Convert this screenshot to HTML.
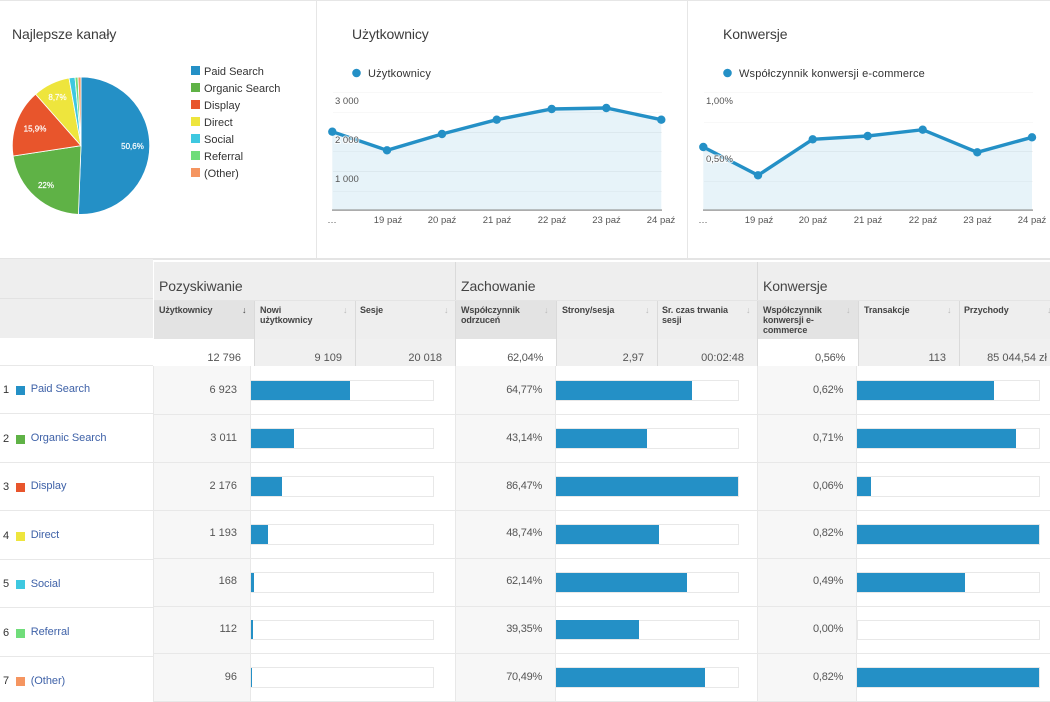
<!DOCTYPE html>
<html><head><meta charset="utf-8"><style>
html,body{margin:0;padding:0;background:#fff}
svg{display:block}
text{font-family:"Liberation Sans",sans-serif}
.t{font-size:14px;fill:#3c3c3c;letter-spacing:-.1px}
.h{font-size:14px;fill:#444;letter-spacing:-.1px}
.l{font-size:11px;fill:#333}
.m{font-size:11px;fill:#333;letter-spacing:.17px}
.a{font-size:9.5px;fill:#555}
.w{paint-order:stroke;stroke:#fff;stroke-width:2px;stroke-opacity:.75}
.s{font-size:9px;fill:#444;font-weight:bold;letter-spacing:-.1px}
.n{font-size:11px;fill:#555;text-anchor:end}
.c{font-size:11px;fill:#555;text-anchor:end;letter-spacing:-.25px}
.r{font-size:11px;fill:#333}
.k{font-size:11px;fill:#3f62a8;letter-spacing:-.05px}
.p{font-size:8px;fill:#fff;stroke:#fff;stroke-width:.2px;text-anchor:middle}
.u{font-size:9px;fill:#bbb}
</style></head><body>
<svg xmlns="http://www.w3.org/2000/svg" width="1050" height="702" viewBox="0 0 1050 702">
<rect width="1050" height="702" fill="#fff"/>
<!-- card frame -->
<rect x="0" y="0" width="1050" height="1" fill="#e6e6e6"/>
<rect x="316" y="0" width="1" height="258" fill="#e6e6e6"/>
<rect x="687" y="0" width="1" height="258" fill="#e6e6e6"/>
<rect x="0" y="258" width="1050" height="2" fill="#e4e4e4"/>

<!-- pie -->
<text x="12" y="39" class="t">Najlepsze kanały</text>
<g stroke="#fff" stroke-width=".8">
<path d="M81 145.7L81 77A68.7 68.7 0 0 1 149.7 145.7A68.7 68.7 0 0 1 78.4 214.35Z" fill="#2490c6"/>
<path d="M81 145.7L78.4 214.35A68.7 68.7 0 0 1 13.1 156Z" fill="#5fb246"/>
<path d="M81 145.7L13.1 156A68.7 68.7 0 0 1 35.6 94.2Z" fill="#e8552c"/>
<path d="M81 145.7L35.6 94.2A68.7 68.7 0 0 1 69 78Z" fill="#eee53d"/>
<path d="M81 145.7L69 78A68.7 68.7 0 0 1 75 77.3Z" fill="#3ec8e0"/>
<path d="M81 145.7L75 77.3A68.7 68.7 0 0 1 78 77.1Z" fill="#70dd7a"/>
<path d="M81 145.7L78 77.1A68.7 68.7 0 0 1 81 77Z" fill="#f59560"/>
</g>
<text x="132.5" y="149" class="p">50,6%</text>
<text x="46" y="188" class="p">22%</text>
<text x="35" y="131.500" class="p">15,9%</text>
<text x="57.500" y="100" class="p">8,7%</text>
<g>
<rect x="191" y="66" width="9" height="9" fill="#2490c6"/>
<rect x="191" y="83" width="9" height="9" fill="#5fb246"/>
<rect x="191" y="100" width="9" height="9" fill="#e8552c"/>
<rect x="191" y="117" width="9" height="9" fill="#eee53d"/>
<rect x="191" y="134" width="9" height="9" fill="#3ec8e0"/>
<rect x="191" y="151" width="9" height="9" fill="#70dd7a"/>
<rect x="191" y="168" width="9" height="9" fill="#f59560"/>
</g>
<text x="204" y="75" class="l">Paid Search</text>
<text x="204" y="92" class="l">Organic Search</text>
<text x="204" y="109" class="l">Display</text>
<text x="204" y="126" class="l">Direct</text>
<text x="204" y="143" class="l">Social</text>
<text x="204" y="160" class="l">Referral</text>
<text x="204" y="177" class="l">(Other)</text>

<!-- users chart -->
<text x="352" y="39" class="t">Użytkownicy</text>
<circle cx="356.500" cy="73" r="4.300" fill="#2490c6"/>
<text x="368" y="77" class="m">Użytkownicy</text>
<g fill="#f3f3f3">
<rect x="333" y="92" width="329" height="1" fill="#f8f8f8"/><rect x="333" y="112" width="329" height="1" fill="#f8f8f8"/>
<rect x="333" y="132" width="329" height="1"/><rect x="333" y="151" width="329" height="1" fill="#f8f8f8"/>
<rect x="333" y="171" width="329" height="1"/><rect x="333" y="191" width="329" height="1" fill="#f8f8f8"/>
</g>
<path d="M332.300 131.700L387 150.300L442 134L496.700 119.700L551.700 109L606.300 108L661.300 119.700V210H332.300Z" fill="#2490c6" fill-opacity=".11"/>
<path d="M332.300 131.700L387 150.300L442 134L496.700 119.700L551.700 109L606.300 108L661.300 119.700" fill="none" stroke="#2490c6" stroke-width="3.400"/>
<g fill="#2490c6"><circle cx="332.300" cy="131.700" r="4.200"/><circle cx="387" cy="150.300" r="4.200"/><circle cx="442" cy="134" r="4.200"/><circle cx="496.700" cy="119.700" r="4.200"/><circle cx="551.700" cy="109" r="4.200"/><circle cx="606.300" cy="108" r="4.200"/><circle cx="661.300" cy="119.700" r="4.200"/></g>
<text x="335" y="104" class="a">3 000</text><text x="335" y="143" class="a w">2 000</text><text x="335" y="182" class="a">1 000</text>
<rect x="332" y="209.500" width="330" height="1.200" fill="#888"/>
<g text-anchor="middle"><text x="332" y="223" class="a">…</text><text x="388" y="223" class="a">19 paź</text><text x="442" y="223" class="a">20 paź</text><text x="497" y="223" class="a">21 paź</text><text x="552" y="223" class="a">22 paź</text><text x="606.500" y="223" class="a">23 paź</text><text x="661" y="223" class="a">24 paź</text></g>

<!-- conversions chart -->
<text x="723" y="39" class="t">Konwersje</text>
<circle cx="727.500" cy="73" r="4.300" fill="#2490c6"/>
<text x="739" y="77" class="m">Współczynnik konwersji e-commerce</text>
<rect x="704" y="92" width="329" height="1" fill="#f8f8f8"/><rect x="704" y="122" width="329" height="1" fill="#f8f8f8"/>
<rect x="704" y="151" width="329" height="1" fill="#f3f3f3"/><rect x="704" y="181" width="329" height="1" fill="#f8f8f8"/>
<path d="M703.300 147L758 175.300L812.700 139.300L867.700 136L922.700 129.700L977.300 152.300L1032 137.300V210H703.300Z" fill="#2490c6" fill-opacity=".11"/>
<path d="M703.300 147L758 175.300L812.700 139.300L867.700 136L922.700 129.700L977.300 152.300L1032 137.300" fill="none" stroke="#2490c6" stroke-width="3.400"/>
<g fill="#2490c6"><circle cx="703.300" cy="147" r="4.200"/><circle cx="758" cy="175.300" r="4.200"/><circle cx="812.700" cy="139.300" r="4.200"/><circle cx="867.700" cy="136" r="4.200"/><circle cx="922.700" cy="129.700" r="4.200"/><circle cx="977.300" cy="152.300" r="4.200"/><circle cx="1032" cy="137.300" r="4.200"/></g>
<text x="706" y="104" class="a">1,00%</text><text x="706" y="162" class="a w">0,50%</text>
<rect x="703" y="209.500" width="330" height="1.200" fill="#888"/>
<g text-anchor="middle"><text x="703" y="223" class="a">…</text><text x="759" y="223" class="a">19 paź</text><text x="813" y="223" class="a">20 paź</text><text x="868" y="223" class="a">21 paź</text><text x="923" y="223" class="a">22 paź</text><text x="977.500" y="223" class="a">23 paź</text><text x="1032" y="223" class="a">24 paź</text></g>

<!-- table header backgrounds -->
<rect x="0" y="259" width="153" height="79" fill="#eeeeee"/>
<rect x="0" y="298" width="153" height="1" fill="#e2e2e2"/>
<rect x="154" y="262" width="896" height="104" fill="#eeeeee"/>
<rect x="254" y="339" width="202" height="27" fill="#f0f0f0"/>
<rect x="556" y="339" width="202" height="27" fill="#f0f0f0"/>
<rect x="858" y="339" width="192" height="27" fill="#f0f0f0"/>
<rect x="154" y="339" width="100" height="27" fill="#fff"/>
<rect x="456" y="339" width="100" height="27" fill="#fff"/>
<rect x="758" y="339" width="100" height="27" fill="#fff"/>
<rect x="154" y="300" width="100" height="39" fill="#e3e3e3"/>
<rect x="456" y="300" width="100" height="39" fill="#e3e3e3"/>
<rect x="758" y="300" width="100" height="39" fill="#e3e3e3"/>
<g fill="#dadada">
<rect x="254" y="300" width="1" height="66"/><rect x="355" y="300" width="1" height="66"/><rect x="455" y="262" width="1" height="104"/>
<rect x="556" y="300" width="1" height="66"/><rect x="657" y="300" width="1" height="66"/><rect x="757" y="262" width="1" height="104"/>
<rect x="858" y="300" width="1" height="66"/><rect x="959" y="300" width="1" height="66"/>
<rect x="154" y="300" width="896" height="1" fill="#e4e4e4"/>
</g>
<text x="159" y="291" class="h">Pozyskiwanie</text>
<text x="461" y="291" class="h">Zachowanie</text>
<text x="763" y="291" class="h">Konwersje</text>

<text x="159" y="313" class="s">Użytkownicy</text>
<text x="260" y="313" class="s">Nowi</text><text x="260" y="323" class="s">użytkownicy</text>
<text x="360" y="313" class="s">Sesje</text>
<text x="461" y="313" class="s">Współczynnik</text><text x="461" y="323" class="s">odrzuceń</text>
<text x="562" y="313" class="s">Strony/sesja</text>
<text x="662" y="313" class="s">Sr. czas trwania</text><text x="662" y="323" class="s">sesji</text>
<text x="763" y="313" class="s">Współczynnik</text><text x="763" y="323" class="s">konwersji e-</text><text x="763" y="333" class="s">commerce</text>
<text x="864" y="313" class="s">Transakcje</text>
<text x="964" y="313" class="s">Przychody</text>
<text x="242" y="313" class="u" style="fill:#444;font-weight:bold">↓</text>
<text x="343" y="313" class="u">↓</text><text x="444" y="313" class="u">↓</text><text x="544" y="313" class="u">↓</text>
<text x="645" y="313" class="u">↓</text><text x="746" y="313" class="u">↓</text><text x="846" y="313" class="u">↓</text><text x="947" y="313" class="u">↓</text><text x="1047" y="313" class="u">↓</text>

<text x="241" y="361" class="n">12 796</text><text x="342" y="361" class="n">9 109</text><text x="442" y="361" class="n">20 018</text>
<text x="543" y="361" class="c">62,04%</text><text x="644" y="361" class="n">2,97</text><text x="744" y="361" class="n">00:02:48</text>
<text x="845" y="361" class="c">0,56%</text><text x="946" y="361" class="n">113</text><text x="1047" y="361" class="n">85 044,54 zł</text>

<!-- number columns -->
<rect x="154" y="366" width="97" height="336" fill="#f7f7f7"/>
<rect x="456" y="366" width="100" height="336" fill="#f7f7f7"/>
<rect x="758" y="366" width="98" height="336" fill="#f7f7f7"/>
<g fill="#e8e8e8">
<rect x="153" y="366" width="1" height="336"/><rect x="250" y="366" width="1" height="336"/><rect x="455" y="366" width="1" height="336"/>
<rect x="555" y="366" width="1" height="336"/><rect x="757" y="366" width="1" height="336"/><rect x="856" y="366" width="1" height="336"/>
<rect x="0" y="365" width="153" height="1"/><rect x="0" y="413" width="153" height="1"/><rect x="0" y="462" width="153" height="1"/><rect x="0" y="510" width="153" height="1"/><rect x="0" y="559" width="153" height="1"/><rect x="0" y="607" width="153" height="1"/><rect x="0" y="656" width="153" height="1"/>
<rect x="154" y="414" width="896" height="1"/><rect x="154" y="462" width="896" height="1"/><rect x="154" y="510" width="896" height="1"/><rect x="154" y="558" width="896" height="1"/><rect x="154" y="606" width="896" height="1"/><rect x="154" y="653" width="896" height="1"/><rect x="154" y="701" width="896" height="1"/>
</g>

<!-- left labels -->
<text x="3" y="393" class="r">1</text><rect x="16" y="386" width="9" height="9" fill="#2490c6"/><text x="30.700" y="392" class="k">Paid Search</text>
<text x="3" y="442" class="r">2</text><rect x="16" y="435" width="9" height="9" fill="#5fb246"/><text x="30.700" y="441" class="k">Organic Search</text>
<text x="3" y="490" class="r">3</text><rect x="16" y="483" width="9" height="9" fill="#e8552c"/><text x="30.700" y="489" class="k">Display</text>
<text x="3" y="539" class="r">4</text><rect x="16" y="532" width="9" height="9" fill="#eee53d"/><text x="30.700" y="538" class="k">Direct</text>
<text x="3" y="587" class="r">5</text><rect x="16" y="580" width="9" height="9" fill="#3ec8e0"/><text x="30.700" y="587" class="k">Social</text>
<text x="3" y="636" class="r">6</text><rect x="16" y="629" width="9" height="9" fill="#70dd7a"/><text x="30.700" y="635" class="k">Referral</text>
<text x="3" y="684" class="r">7</text><rect x="16" y="677" width="9" height="9" fill="#f59560"/><text x="30.700" y="684" class="k">(Other)</text>

<!-- values -->
<text x="237" y="393" class="n">6 923</text><text x="237" y="441" class="n">3 011</text><text x="237" y="489" class="n">2 176</text><text x="237" y="536" class="n">1 193</text><text x="237" y="584" class="n">168</text><text x="237" y="632" class="n">112</text><text x="237" y="680" class="n">96</text>
<text x="542" y="393" class="c">64,77%</text><text x="542" y="441" class="c">43,14%</text><text x="542" y="489" class="c">86,47%</text><text x="542" y="536" class="c">48,74%</text><text x="542" y="584" class="c">62,14%</text><text x="542" y="632" class="c">39,35%</text><text x="542" y="680" class="c">70,49%</text>
<text x="843" y="393" class="c">0,62%</text><text x="843" y="441" class="c">0,71%</text><text x="843" y="489" class="c">0,06%</text><text x="843" y="536" class="c">0,82%</text><text x="843" y="584" class="c">0,49%</text><text x="843" y="632" class="c">0,00%</text><text x="843" y="680" class="c">0,82%</text>

<!-- bar outlines -->
<g fill="#fff" stroke="#e8e8e8">
<rect x="251.500" y="380.500" width="182" height="20"/><rect x="251.500" y="428.500" width="182" height="20"/><rect x="251.500" y="476.500" width="182" height="20"/><rect x="251.500" y="524.500" width="182" height="20"/><rect x="251.500" y="572.500" width="182" height="20"/><rect x="251.500" y="620.500" width="182" height="19"/><rect x="251.500" y="667.500" width="182" height="20"/>
<rect x="556.500" y="380.500" width="182" height="20"/><rect x="556.500" y="428.500" width="182" height="20"/><rect x="556.500" y="476.500" width="182" height="20"/><rect x="556.500" y="524.500" width="182" height="20"/><rect x="556.500" y="572.500" width="182" height="20"/><rect x="556.500" y="620.500" width="182" height="19"/><rect x="556.500" y="667.500" width="182" height="20"/>
<rect x="857.500" y="380.500" width="182" height="20"/><rect x="857.500" y="428.500" width="182" height="20"/><rect x="857.500" y="476.500" width="182" height="20"/><rect x="857.500" y="524.500" width="182" height="20"/><rect x="857.500" y="572.500" width="182" height="20"/><rect x="857.500" y="620.500" width="182" height="19"/><rect x="857.500" y="667.500" width="182" height="20"/>
</g>
<!-- bar fills -->
<g fill="#2490c6">
<rect x="251" y="381" width="99" height="19"/><rect x="251" y="429" width="43" height="19"/><rect x="251" y="477" width="31" height="19"/><rect x="251" y="525" width="17" height="19"/><rect x="251" y="573" width="3" height="19"/><rect x="251" y="620" width="2" height="19"/><rect x="251" y="668" width="1" height="19"/>
<rect x="556" y="381" width="136" height="19"/><rect x="556" y="429" width="91" height="19"/><rect x="556" y="477" width="182" height="19"/><rect x="556" y="525" width="103" height="19"/><rect x="556" y="573" width="131" height="19"/><rect x="556" y="620" width="83" height="19"/><rect x="556" y="668" width="149" height="19"/>
<rect x="857" y="381" width="137" height="19"/><rect x="857" y="429" width="159" height="19"/><rect x="857" y="477" width="14" height="19"/><rect x="857" y="525" width="182" height="19"/><rect x="857" y="573" width="108" height="19"/><rect x="857" y="668" width="182" height="19"/>
</g>
</svg>
</body></html>
